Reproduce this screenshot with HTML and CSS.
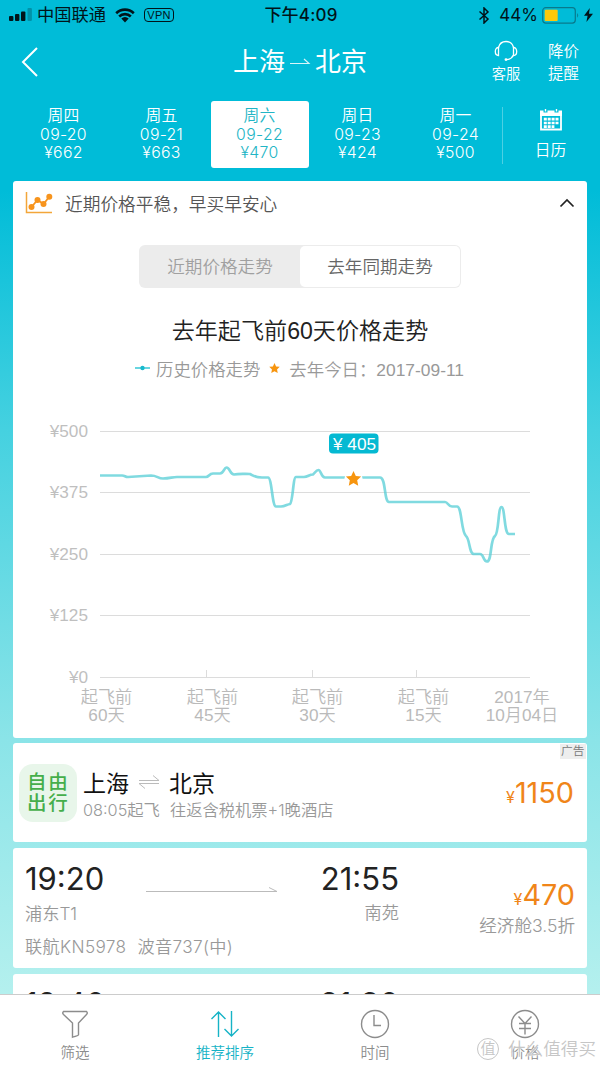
FILE: index.html
```html
<!DOCTYPE html>
<html lang="zh-CN">
<head>
    <meta charset="UTF-8">
    <meta name="viewport" content="width=device-width, initial-scale=1.0">
    <title>上海 - 北京</title>
    <link rel="stylesheet" href="styles.css">
</head>
<body>
    <div class="status">
        <div class="status-left">
            <svg class="signal" width="24" height="14" viewBox="0 0 24 14">
                <rect x="0" y="8" width="4.4" height="5" rx="1"/>
                <rect x="6" y="6" width="4.4" height="7" rx="1"/>
                <rect x="12" y="3.5" width="4.4" height="9.5" rx="1"/>
                <rect x="18.5" y="0" width="4.4" height="13" rx="1" opacity=".25"/>
            </svg>
            <span class="carrier">中国联通</span>
            <svg class="wifi" width="20" height="15" viewBox="0 0 20 15">
                <path d="M1.2 5.2a12.6 12.6 0 0 1 17.6 0M4.2 8.5a8.2 8.2 0 0 1 11.6 0" fill="none" stroke="#00141a" stroke-width="2.6"/>
                <path d="M6.3 10.6a5.3 5.3 0 0 1 7.4 0L10 14.6z"/>
            </svg>
            <span class="vpn">VPN</span>
        </div>
        <div class="clock">下午4:09</div>
        <div class="status-right">
            <svg width="12" height="17" viewBox="0 0 12 17"><path d="M1.5 4.5l8.500 7.500-4 4V1l4 4-8.500 7.500" fill="none" stroke="#00141a" stroke-width="1.500"/></svg>
            <span class="percent">44%</span>
            <svg width="38" height="17" viewBox="0 0 38 17">
                <rect x=".7" y=".7" width="32.6" height="15.4" rx="3" fill="none" stroke="#08798c" stroke-width="1.2"/>
                <rect x="2.7" y="2.7" width="13" height="11.4" rx="1" fill="#fdc90a"/>
                <path d="M35.2 6q2 2.4 0 4.8z" fill="#08798c"/>
            </svg>
            <svg class="bolt" width="9" height="14" viewBox="0 0 9 14"><path d="M5.8 0L0 7.8h3.6L2.4 14 9 5.8H5z"/></svg>
        </div>
    </div>

    <div class="header">
        <svg class="back" width="20" height="32" viewBox="0 0 20 32"><path d="M17 2L3 16l14 14" fill="none" stroke="#fff" stroke-width="2"/></svg>
        <div class="route">
            <span>上海</span>
            <svg width="22" height="10" viewBox="0 0 22 10"><path d="M1 6.5h19l-5-4.5" fill="none" stroke="#d8f5fa" stroke-width="1.1"/></svg>
            <span>北京</span>
        </div>
        <div class="service">
            <svg width="24" height="22" viewBox="0 0 24 22" fill="none" stroke="#fff" stroke-width="1.3">
                <path d="M4.5 7.5C5.5 3.5 8.5 1.5 12 1.5s6.500 2 7.500 6M19.500 15c-1.500 3-4 4.600-7 4.600"/>
                <path d="M4.500 7.500v8C2.500 15.500 1.300 14 1.300 11.500S2.500 7.500 4.500 7.500zM19.500 7.500v8c2 0 3.200-1.500 3.200-4s-1.200-4-3.200-4z"/>
                <circle cx="12" cy="19.600" r=".8"/>
            </svg>
            <span>客服</span>
        </div>
        <div class="remind">降价<br>提醒</div>
    </div>

    <div class="dates">
        <div class="day">周四<br>09-20<br>¥662</div>
        <div class="day">周五<br>09-21<br>¥663</div>
        <div class="day active">周六<br>09-22<br>¥470</div>
        <div class="day">周日<br>09-23<br>¥424</div>
        <div class="day">周一<br>09-24<br>¥500</div>
        <div class="calendar">
            <svg width="24" height="24" viewBox="0 0 24 24">
                <path d="M2 4v17.500h20V4" fill="none" stroke="#fff" stroke-width="1.800"/>
                <path d="M1 2.500h3.500v2h4v-2h7v2h4v-2H23V8H1z" fill="#fff"/>
                <path d="M6.500 1v2.500M17.500 1v2.500" stroke="#fff" stroke-width="1.400"/>
                <path d="M4.800 11.200h14.700M4.800 15h14.700M4.800 18.700h10.600" stroke="#fff" stroke-width="2.700" stroke-dasharray="3 .9"/>
            </svg>
            <span>日历</span>
        </div>
    </div>

    <div class="card trend">
        <div class="trend-head">
            <svg width="28" height="22" viewBox="0 0 28 22">
                <path d="M1.500 0v20.500H27" fill="none" stroke="#f3a63a" stroke-width="1.500"/>
                <path d="M6.500 15l6-7 6 4 6-7.500" fill="none" stroke="#f7941d" stroke-width="1.800"/>
                <g fill="#f7941d"><circle cx="6.500" cy="15" r="3"/><circle cx="12.500" cy="8" r="3"/><circle cx="18.500" cy="12" r="3"/><circle cx="24.300" cy="4.800" r="3"/></g>
            </svg>
            <span>近期价格平稳，早买早安心</span>
            <svg class="fold" width="16" height="10" viewBox="0 0 16 10"><path d="M1.500 8.500L8 2l6.500 6.500" fill="none" stroke="#222" stroke-width="1.700"/></svg>
        </div>
        <div class="toggle">
            <div class="toggle-item">近期价格走势</div>
            <div class="toggle-item selected">去年同期走势</div>
        </div>
        <h2>去年起飞前60天价格走势</h2>
        <div class="legend">
            <svg width="15" height="6" viewBox="0 0 15 6"><path d="M0 3h15" stroke="#43cbd9" stroke-width="1.600"/><circle cx="7.500" cy="3" r="2.200" fill="#19b9cc"/></svg>
            <span class="history">历史价格走势</span>
            <svg width="11" height="11" viewBox="-10 -10 20 20"><path class="star" d="M0-10l2.900 6.200 6.600.8-4.900 4.600 1.300 6.700L0 5l-5.900 3.300 1.300-6.700L-9.500-3l6.600-.8z"/></svg>
            <span>去年今日：<span class="last-date">2017-09-11</span></span>
        </div>
        <svg class="chart" width="574" height="338" viewBox="13 400 574 338">
            <path class="grid" d="M100 431.500h430M100 492.500h430M100 554.500h430M100 615.500h430M100 677.500h430M206.500 670v7M312.500 670v7M416.500 670v7"/>
            <g class="y-labels">
                <text x="88" y="437">¥500</text>
                <text x="88" y="498">¥375</text>
                <text x="88" y="560">¥250</text>
                <text x="88" y="621">¥125</text>
                <text x="88" y="683">¥0</text>
            </g>
            <g class="x-labels">
                <text x="106.500" y="703">起飞前</text><text x="106.500" y="721">60天</text>
                <text x="212.500" y="703">起飞前</text><text x="212.500" y="721">45天</text>
                <text x="317.500" y="703">起飞前</text><text x="317.500" y="721">30天</text>
                <text x="423.500" y="703">起飞前</text><text x="423.500" y="721">15天</text>
                <text x="522" y="703">2017年</text><text x="522" y="721">10月04日</text>
            </g>
            <path class="line" d="M100 475.500H122C125 475.500 125 477 128 477L151 475.500C157 475.500 158 478.500 163 478.500C170 478.500 172 477 177 477H206C209 477 209 473.500 213 473.500H220C224 473.500 224 467.500 226.500 467.500C230 467.500 230 474.500 234 474.500C239 473.500 244 474 250 474C254 476 255 477.500 262 477.500H268C272 477.500 272 506.500 276 506.500H281C285 506.500 287 504.500 290 504C293 502 293 477 296 477H304C308 477 309 474.500 313 474.500C315 473 316 470 318.500 470C321 470 321 477.500 325 477.500H380C386 477.500 384 502 389 502H445C448 502 448 506.500 452 506.500H457C462 506.500 461 532 466 536C470 539 469 554 474 554H480C484 554 483 561.500 487 561.500C492 561.500 490 539 495 536C499 533 498 507 501.500 507C505 507 504 534 509 534H515"/>
            <circle cx="353.500" cy="478.500" r="9" fill="#fff"/>
            <path class="star" transform="translate(353.500 479) scale(.8)" d="M0-10l2.900 6.200 6.600.8-4.900 4.600 1.300 6.700L0 5l-5.900 3.300 1.300-6.700L-9.500-3l6.600-.8z"/>
            <rect x="329" y="433.500" width="49.500" height="20" rx="4" fill="#05b9d2"/>
            <text class="tip" x="333" y="449.500">¥ 405</text>
        </svg>
    </div>

    <div class="card package">
        <div class="badge">自由<br>出行</div>
        <div class="package-info">
            <div class="package-route">
                <span>上海</span>
                <svg width="22" height="16" viewBox="0 0 22 16"><path d="M1 6.500h20l-6-5M21 9.500H1l6 5" fill="none" stroke="#bbb" stroke-width="1"/></svg>
                <span>北京</span>
            </div>
            <div class="package-desc"><span>08:05起飞</span><span>往返含税机票+1晚酒店</span></div>
        </div>
        <div class="price"><small>¥</small>1150</div>
        <div class="ad">广告</div>
    </div>

    <div class="card flight">
        <div class="depart">
            <div class="time">19:20</div>
            <div class="airport">浦东T1</div>
            <div class="plane"><span>联航KN5978</span><span>波音737(中)</span></div>
        </div>
        <svg class="arrow" width="132" height="8" viewBox="0 0 132 8"><path d="M0 6.500h131l-8-4" fill="none" stroke="#bbb" stroke-width="1"/></svg>
        <div class="arrive">
            <div class="time">21:55</div>
            <div class="airport">南苑</div>
        </div>
        <div class="fare">
            <div class="price"><small>¥</small>470</div>
            <div class="cabin">经济舱3.5折</div>
        </div>
    </div>

    <div class="card flight next">
        <div class="depart"><div class="time">19:40</div></div>
        <div class="arrive"><div class="time">21:30</div></div>
    </div>

    <div class="tabbar">
        <div class="tab">
            <svg width="30" height="30" viewBox="0 0 30 30"><path d="M3.500 2.500h23q1.500 1.500 0 3l-8 8.500V26q0 .5-6 2.200V14L3.500 5.500q-1.500-1.500 0-3z"/></svg>
            <span>筛选</span>
        </div>
        <div class="tab current">
            <svg width="30" height="30" viewBox="0 0 30 30"><path d="M8.500 28V3M1.500 10l7-7 7 7M21.500 2v25M14.500 20l7 7 7-7"/></svg>
            <span>推荐排序</span>
        </div>
        <div class="tab">
            <svg width="30" height="30" viewBox="0 0 30 30"><circle cx="15" cy="15" r="13.500"/><path d="M14 6v10.500h7"/></svg>
            <span>时间</span>
        </div>
        <div class="tab">
            <svg width="30" height="30" viewBox="0 0 30 30"><circle cx="15" cy="15" r="13.500"/><path d="M8.500 7.500L15 14.500l6.500-7M15 14.500v11M9 14.500h12M9 19.500h12"/></svg>
            <span>价格</span>
        </div>
    </div>
    <div class="watermark"><span class="mark">值</span><span>什么值得买</span></div>
</body>
</html>
```

FILE: styles.css
```css
* {
    box-sizing: border-box;
}
body {
    font-family: Inter, 'Noto Sans CJK SC', sans-serif;
    font-weight: 350;
    margin: 0;
    height: 1067px;
    overflow: hidden;
    position: relative;
    background: linear-gradient(#00bcd8 0, #00bcd8 190px, #45d1e0 430px, #8be4e8 740px, #b4f0ee 994px);
}
svg {
    display: block;
    flex: none;
}
.status {
    height: 30px;
    padding: 0 7px 0 9px;
    display: grid;
    grid-template-columns: 1fr auto 1fr;
    align-items: center;
    font-size: 17px;
    font-weight: 400;
    color: #00141a;
    fill: #00141a;
    white-space: nowrap;
}
.status-left,
.status-right {
    display: flex;
    align-items: center;
}
.status-right {
    justify-content: flex-end;
}
.carrier {
    margin: 0 9px 0 4px;
    font-size: 17.3px;
    line-height: 24px;
}
.vpn {
    margin-left: 9px;
    padding: 0 2px;
    border: 1px solid #00141a;
    border-radius: 4px;
    font-family: 'Liberation Sans', sans-serif;
    font-size: 11px;
    line-height: 12px;
    letter-spacing: .4px;
}
.clock {
    font-weight: 500;
    letter-spacing: .2px;
    line-height: 24px;
    padding-bottom: 1px;
}
.percent {
    margin: 0 4px 0 9px;
}
.bolt {
    margin-left: 4px;
}
.header {
    height: 71px;
    display: grid;
    grid-template-columns: 200px 200px 77px 58px 55px;
    color: #fff;
}
.back {
    margin: 16px 0 0 20px;
}
.route {
    display: flex;
    justify-content: center;
    gap: 4px;
    font-size: 26px;
    font-weight: 400;
    line-height: 62px;
    align-items: center;
    height: 64px;
    white-space: nowrap;
}
.service {
    grid-column: 4;
    padding-top: 10px;
    display: flex;
    flex-direction: column;
    align-items: center;
    font-size: 14.3px;
    line-height: 23px;
}
.remind {
    font-size: 15.5px;
    line-height: 22px;
    padding: 11px 0 0 13px;
}
.dates {
    height: 67px;
    padding-left: 14.5px;
    display: grid;
    grid-template-columns: repeat(5, 98px) 1fr;
    grid-template-rows: 67px;
    color: #fff;
    font-size: 15.8px;
}
.day {
    padding-top: 6px;
    line-height: 18.7px;
    text-align: center;
    letter-spacing: .3px;
}
.day.active {
    background: #fff;
    border-radius: 3px;
    color: #22b5c5;
}
.calendar {
    display: flex;
    flex-direction: column;
    align-items: center;
    margin: 6px 0 4px -2.5px;
    padding: 1px 2px 0 0;
    border-left: 1px solid #4dd0e3;
    line-height: 38px;
}
.card {
    width: 574px;
    margin: 0 0 6px 13px;
    background: #fff;
    border-radius: 3px;
}
.trend {
    height: 557px;
    margin-top: 13px;
    margin-bottom: 5px;
}
.trend-head {
    height: 44px;
    padding: 0 12px;
    display: flex;
    align-items: center;
    gap: 12px;
    font-size: 17.7px;
    color: #555;
}
.fold {
    margin-left: auto;
}
.toggle {
    width: 322px;
    height: 43px;
    margin: 20px 0 0 126px;
    padding: 1px;
    background: #ececec;
    border-radius: 6px;
    display: grid;
    grid-template-columns: 1fr 1fr;
}
.toggle-item {
    text-align: center;
    font-size: 17.6px;
    line-height: 41px;
    color: #a0a0a0;
}
.toggle-item.selected {
    background: #fff;
    border-radius: 5px;
    color: #666;
}
h2 {
    margin: 27px 0 0;
    font-family: 'Liberation Sans', 'Noto Sans CJK SC', sans-serif;
    font-size: 23.1px;
    font-weight: 350;
    line-height: 32px;
    text-align: center;
    color: #222;
}
.legend {
    height: 26px;
    margin-top: 8px;
    padding-left: 122px;
    display: flex;
    align-items: center;
    font-size: 17.4px;
    color: #999;
    white-space: nowrap;
}
.history {
    margin: 0 9px 0 6px;
}
.legend > span:last-child {
    margin-left: 9px;
}
.last-date {
    font-family: 'Liberation Sans', sans-serif;
}
.star {
    fill: #f7950f;
}
.chart {
    margin-top: 19px;
    font-family: 'Liberation Sans', 'Noto Sans CJK SC', sans-serif;
    font-size: 17.2px;
}
.grid {
    fill: none;
    stroke: #dcdcdc;
    stroke-width: 1;
}
.y-labels {
    text-anchor: end;
    fill: #bfbfbf;
}
.x-labels {
    text-anchor: middle;
    fill: #bababa;
}
.line {
    fill: none;
    stroke: #55ced6;
    stroke-opacity: .75;
    stroke-width: 2.7;
    stroke-linecap: butt;
}
.tip {
    fill: #fff;
}
.package {
    height: 99px;
    display: flex;
    position: relative;
}
.badge {
    width: 58px;
    height: 58px;
    margin: 21px 0 0 6px;
    padding: 8px 0 0 8px;
    border-radius: 14px;
    background: #e8f6ea;
    color: #45ae4b;
    font-size: 19.5px;
    font-weight: 500;
    line-height: 21px;
    letter-spacing: 1.8px;
    white-space: nowrap;
}
.package-info {
    margin: 21px 0 0 6px;
}
.package-route {
    height: 35px;
    display: flex;
    align-items: center;
    gap: 9px;
    font-size: 23px;
    font-weight: 400;
    color: #111;
}
.package-desc {
    display: flex;
    gap: 10px;
    line-height: 22px;
    font-size: 16.3px;
    color: #999;
}
.price {
    font-size: 28.8px;
    font-weight: 400;
    line-height: 36px;
    color: #f08519;
    text-align: right;
}
.price small {
    font-size: 16px;
}
.package .price {
    margin: 32px 13px 0 auto;
}
.ad {
    position: absolute;
    top: 1px;
    right: 1px;
    width: 26px;
    height: 15px;
    background: #eee;
    color: #777;
    font-size: 11.7px;
    line-height: 14px;
    padding-left: 1px;
}
.flight {
    height: 120px;
    padding: 12px 12px 0;
    display: grid;
    grid-template-columns: 121px 132px 121px 1fr;
    white-space: nowrap;
}
.time {
    font-size: 31px;
    font-weight: 400;
    line-height: 38px;
    color: #222;
}
.airport {
    font-size: 17.2px;
    line-height: 24px;
    margin-top: 4px;
    color: #999;
}
.plane {
    display: flex;
    gap: 11px;
    margin-top: 9px;
    font-size: 17.2px;
    line-height: 24px;
    letter-spacing: .35px;
    color: #999;
}
.arrow {
    margin-top: 25px;
}
.arrive {
    text-align: right;
}
.arrive .airport {
    margin-top: 3px;
}
.fare {
    text-align: right;
    padding-top: 17px;
}
.cabin {
    font-size: 17.6px;
    line-height: 24px;
    margin-top: -3px;
    color: #999;
}
.next {
    padding-top: 11px;
}
.next .arrive {
    grid-column: 3;
}
.tabbar {
    position: absolute;
    left: 0;
    bottom: 0;
    width: 100%;
    height: 73px;
    background: #fff;
    border-top: 1px solid #ccc;
    display: grid;
    grid-template-columns: repeat(4, 1fr);
}
.tab {
    padding-top: 14px;
    display: flex;
    flex-direction: column;
    align-items: center;
    font-size: 14.5px;
    line-height: 27px;
    color: #8c8c8c;
}
.tab svg {
    fill: none;
    stroke: currentColor;
    stroke-width: 1.4;
}
.tab.current {
    color: #16b3c6;
}
.watermark {
    position: absolute;
    left: 477px;
    top: 1038px;
    display: flex;
    align-items: center;
    gap: 9px;
    font-size: 17.6px;
    line-height: 22px;
    color: #c6c6c6;
    text-shadow: 0 0 2px #fff, 0 0 1px #fff;
    white-space: nowrap;
}
.mark {
    width: 22px;
    height: 22px;
    border: 1px solid #c6c6c6;
    border-radius: 50%;
    font-size: 15px;
    line-height: 19px;
    text-align: center;
}
```
